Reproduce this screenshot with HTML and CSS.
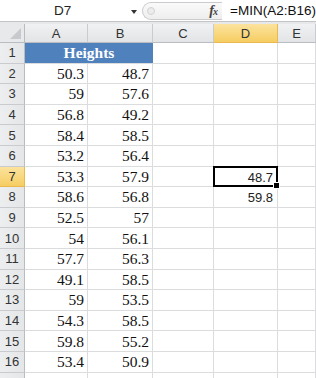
FILE: index.html
```html
<!DOCTYPE html>
<html>
<head>
<meta charset="utf-8">
<link rel="stylesheet" href="styles.css">
</head>
<body>
<div class="formula-bar">
  <div class="name-box"><span class="name">D7</span><span class="arrow"></span></div>
  <div class="fx-area"><span class="knob"></span><span class="fx">f<span class="x">x</span></span></div>
  <div class="formula">=MIN(A2:B16)</div>
</div>
<div class="band"></div>
<div class="sheet">
  <div class="corner"></div>
  <div class="ch">A</div><div class="ch">B</div><div class="ch">C</div><div class="ch sel">D</div><div class="ch">E</div>

  <div class="rh">1</div><div class="title">Heights</div><div class="c"></div><div class="c"></div><div class="c"></div>
  <div class="rh">2</div><div class="c n">50.3</div><div class="c n">48.7</div><div class="c"></div><div class="c"></div><div class="c"></div>
  <div class="rh">3</div><div class="c n">59</div><div class="c n">57.6</div><div class="c"></div><div class="c"></div><div class="c"></div>
  <div class="rh">4</div><div class="c n">56.8</div><div class="c n">49.2</div><div class="c"></div><div class="c"></div><div class="c"></div>
  <div class="rh">5</div><div class="c n">58.4</div><div class="c n">58.5</div><div class="c"></div><div class="c"></div><div class="c"></div>
  <div class="rh">6</div><div class="c n">53.2</div><div class="c n">56.4</div><div class="c"></div><div class="c"></div><div class="c"></div>
  <div class="rh sel">7</div><div class="c n">53.3</div><div class="c n">57.9</div><div class="c"></div><div class="c s active">48.7</div><div class="c"></div>
  <div class="rh">8</div><div class="c n">58.6</div><div class="c n">56.8</div><div class="c"></div><div class="c s">59.8</div><div class="c"></div>
  <div class="rh">9</div><div class="c n">52.5</div><div class="c n">57</div><div class="c"></div><div class="c"></div><div class="c"></div>
  <div class="rh">10</div><div class="c n">54</div><div class="c n">56.1</div><div class="c"></div><div class="c"></div><div class="c"></div>
  <div class="rh">11</div><div class="c n">57.7</div><div class="c n">56.3</div><div class="c"></div><div class="c"></div><div class="c"></div>
  <div class="rh">12</div><div class="c n">49.1</div><div class="c n">58.5</div><div class="c"></div><div class="c"></div><div class="c"></div>
  <div class="rh">13</div><div class="c n">59</div><div class="c n">53.5</div><div class="c"></div><div class="c"></div><div class="c"></div>
  <div class="rh">14</div><div class="c n">54.3</div><div class="c n">58.5</div><div class="c"></div><div class="c"></div><div class="c"></div>
  <div class="rh">15</div><div class="c n">59.8</div><div class="c n">55.2</div><div class="c"></div><div class="c"></div><div class="c"></div>
  <div class="rh">16</div><div class="c n">53.4</div><div class="c n">50.9</div><div class="c"></div><div class="c"></div><div class="c"></div>
  <div class="rh"></div><div class="c"></div><div class="c"></div><div class="c"></div><div class="c"></div><div class="c"></div>
</div>
</body>
</html>
```
FILE: styles.css
```css
* { box-sizing: border-box; }
html, body { margin: 0; padding: 0; background: #fff; overflow: hidden; }
body { width: 316px; height: 378px; font-family: "Liberation Sans", Arial, sans-serif; }

.formula-bar {
  height: 22px;
  display: flex;
  align-items: stretch;
  border-bottom: 1px solid #c4c4c4;
  background: #fff;
}
.name-box {
  width: 142px;
  position: relative;
  display: flex;
  align-items: center;
  padding-left: 54px;
  font-size: 13.5px;
  color: #222;
}
.arrow {
  position: absolute;
  left: 131px;
  top: 10px;
  width: 0; height: 0;
  border-left: 3.5px solid transparent;
  border-right: 3.5px solid transparent;
  border-top: 4px solid #333;
}
.fx-area {
  width: 80px;
  margin: 2px 0 1px 0;
  border: 1px solid #c9cbce;
  border-right: none;
  border-radius: 9px 0 0 9px;
  background: linear-gradient(#fafafa, #eeeeee);
  display: flex;
  align-items: center;
  justify-content: space-between;
  padding: 0 5px 0 4px;
}
.knob {
  width: 8px; height: 8px;
  border-radius: 50%;
  border: 1px solid #d2d2d2;
  background: #ececec;
}
.fx {
  font-family: "Liberation Serif", serif;
  font-style: italic;
  font-weight: bold;
  font-size: 14px;
  color: #444;
  letter-spacing: -1px;
}
.fx .x { font-size: 10px; }
.formula {
  flex: 1;
  display: flex;
  align-items: center;
  padding-left: 8px;
  font-size: 13.5px;
  color: #111;
  white-space: nowrap;
}
.band { height: 2px; background: #e7e8ea; }

.sheet {
  display: grid;
  grid-template-columns: 25px 63px 65px 61px 64px 1fr;
  grid-template-rows: 19px repeat(17, 20.6px);
}
.corner {
  background: #e8e9eb;
  border-right: 1px solid #b9bcc0;
  border-bottom: 1px solid #b9bcc0;
  position: relative;
}
.corner::after {
  content: "";
  position: absolute;
  right: 3px; bottom: 3px;
  width: 0; height: 0;
  border-left: 11px solid transparent;
  border-bottom: 11px solid #c7c9cc;
}
.ch {
  background: linear-gradient(#f0f1f2, #e3e4e6);
  border-right: 1px solid #c9cbce;
  border-bottom: 1px solid #b9bcc0;
  display: flex; align-items: center; justify-content: center;
  font-size: 13px;
  color: #333;
}
.rh {
  background: linear-gradient(90deg, #eceef0, #e4e6e8);
  border-right: 1px solid #b9bcc0;
  border-bottom: 1px solid #c9cbce;
  display: flex; align-items: center; justify-content: center;
  font-size: 13px;
  color: #333;
}
.ch.sel, .rh.sel {
  background: linear-gradient(#fbe39e, #f6cd62);
  border-color: #e9b84e;
}
.c {
  border-right: 1px solid #dadcdd;
  border-bottom: 1px solid #dadcdd;
  display: flex;
  align-items: center;
  justify-content: flex-end;
  padding-right: 3px;
}
.n {
  font-family: "Liberation Serif", "Times New Roman", serif;
  font-size: 15.5px;
  color: #111;
  padding-top: 1px;
}
.s {
  font-size: 13px;
  color: #222;
  padding-right: 4px;
  padding-top: 2px;
}
.title {
  grid-column: span 2;
  background: #4f81bd;
  border-bottom: 1px solid #dadcdd;
  color: #fff;
  font-family: "Liberation Serif", "Times New Roman", serif;
  font-weight: bold;
  font-size: 15.5px;
  display: flex; align-items: center; justify-content: center;
}
.active { position: relative; }
.active::before {
  content: "";
  position: absolute;
  top: -1px; left: -1px; right: -1px; bottom: -1px;
  border: 2px solid #000;
}
.active::after {
  content: "";
  position: absolute;
  right: -3px; bottom: -3px;
  width: 5px; height: 5px;
  background: #000;
  border: 1px solid #fff;
}
```
